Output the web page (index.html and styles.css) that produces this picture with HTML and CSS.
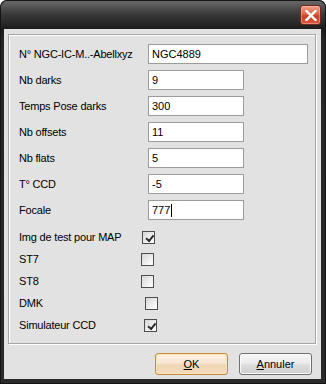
FILE: index.html
```html
<!DOCTYPE html>
<html lang="fr">
  <head>
    <meta charset="UTF-8" />
    <title>Paramètres</title>
    <link rel="stylesheet" href="styles.css">
  </head>
  <body>
    <div class="window">
      <div class="titlebar">
        <button class="close-btn" aria-label="Fermer">
          <svg width="12" height="11" viewBox="0 0 12 11">
            <path d="M1.5 1 L10.5 10 M10.5 1 L1.5 10" stroke="#fff" stroke-width="2.4" stroke-linecap="square" />
          </svg>
        </button>
      </div>

      <div class="client">
        <div class="group-box">
          <div class="row">
            <label>N° NGC-IC-M..-Abellxyz</label>
            <div class="field wide">NGC4889</div>
          </div>
          <div class="row">
            <label>Nb darks</label>
            <div class="field">9</div>
          </div>
          <div class="row">
            <label>Temps Pose darks</label>
            <div class="field">300</div>
          </div>
          <div class="row">
            <label>Nb offsets</label>
            <div class="field">11</div>
          </div>
          <div class="row">
            <label>Nb flats</label>
            <div class="field">5</div>
          </div>
          <div class="row">
            <label>T° CCD</label>
            <div class="field">-5</div>
          </div>
          <div class="row">
            <label>Focale</label>
            <div class="field">777<span class="caret"></span></div>
          </div>

          <div class="check-row">
            <label>Img de test pour MAP</label>
            <span class="check checked off-1"></span>
          </div>
          <div class="check-row">
            <label>ST7</label>
            <span class="check off-0"></span>
          </div>
          <div class="check-row">
            <label>ST8</label>
            <span class="check off-0"></span>
          </div>
          <div class="check-row">
            <label>DMK</label>
            <span class="check off-4"></span>
          </div>
          <div class="check-row">
            <label>Simulateur CCD</label>
            <span class="check checked off-3"></span>
          </div>
        </div>

        <div class="buttons">
          <button class="btn default"><u>O</u>K</button>
          <button class="btn"><u>A</u>nnuler</button>
        </div>
      </div>
    </div>
  </body>
</html>
```

FILE: styles.css
```css
* {
  margin: 0;
  padding: 0;
  box-sizing: border-box;
}

body {
  width: 326px;
  height: 384px;
  overflow: hidden;
  background: #ffffff;
  font-family: 'Liberation Sans', Arial, sans-serif;
  font-size: 11px;
  color: #000;
}

.window {
  width: 326px;
  height: 384px;
  display: flex;
  flex-direction: column;
  padding: 0 5px 5px 4px;
  border-radius: 7px 7px 0 0;
  background: linear-gradient(#6b6b6b 0px, #3a3a3a 14px, #1c1c1c 29px, #262626 40px, #2a2a2a 100%);
  box-shadow: inset 0 0 0 1px #151515;
}

.titlebar {
  height: 29px;
  display: flex;
  justify-content: flex-end;
  align-items: flex-start;
  padding-top: 5px;
}

.close-btn {
  width: 21px;
  height: 20px;
  border: 1px solid #6e2a1e;
  border-radius: 3px;
  background: linear-gradient(#f0a08c 0%, #e0634a 45%, #c8412a 55%, #d8573c 100%);
  display: flex;
  align-items: center;
  justify-content: center;
  box-shadow: inset 0 0 0 1px rgba(255, 200, 180, 0.45);
}

.client {
  flex: 1;
  background: #e2e2e2;
  padding: 5px 5px 0 4px;
  display: flex;
  flex-direction: column;
}

.group-box {
  height: 310px;
  border: 1px solid #a5a5a5;
  box-shadow: inset 1px 1px #fff, 1px 1px #fff;
  padding: 9px 0 0 10px;
}

.row {
  display: flex;
  align-items: center;
  height: 20px;
  margin-bottom: 6px;
}

.row label,
.check-row label {
  width: 129px;
  letter-spacing: -0.2px;
}

.field {
  width: 96px;
  height: 20px;
  background: #fff;
  border: 1px solid #9c9c9c;
  padding-left: 3px;
  line-height: 18px;
  display: flex;
  align-items: center;
}

.field.wide {
  width: 160px;
}

.caret {
  display: inline-block;
  width: 1px;
  height: 13px;
  background: #000;
  margin-left: 1px;
}

.check-row {
  display: flex;
  align-items: center;
  height: 22px;
}

.check {
  width: 13px;
  height: 13px;
  border: 1px solid #4e4e4e;
  background: linear-gradient(135deg, #d6d6d6 0%, #f4f4f4 70%, #ffffff 100%);
  position: relative;
}

.check.checked::after {
  content: '';
  position: absolute;
  left: 2px;
  top: 1px;
  width: 6px;
  height: 3px;
  border-left: 2px solid #2a2a2a;
  border-bottom: 2px solid #2a2a2a;
  transform: rotate(-50deg) translate(-1px, 2px);
}

.off-0 { margin-left: -7px; }
.off-1 { margin-left: -6px; }
.off-3 { margin-left: -4px; }
.off-4 { margin-left: -3px; }

.buttons {
  display: flex;
  justify-content: flex-end;
  gap: 11px;
  padding: 9px 4px 0 0;
}

.btn {
  width: 73px;
  height: 22px;
  font-family: 'Liberation Sans', Arial, sans-serif;
  font-size: 11px;
  color: #000;
  border: 1px solid #707070;
  border-radius: 3px;
  background: linear-gradient(#f6f6f6 0%, #ececec 45%, #dddddd 55%, #cfcfcf 100%);
  box-shadow: inset 0 0 0 1px #fbfbfb;
}

.btn.default {
  border-color: #c88a3c;
  background: linear-gradient(#fdf3e6 0%, #f7e6d0 45%, #f0d5b4 55%, #f4dcbd 100%);
  box-shadow: inset 0 0 0 1px #fbe3b8;
}
```
